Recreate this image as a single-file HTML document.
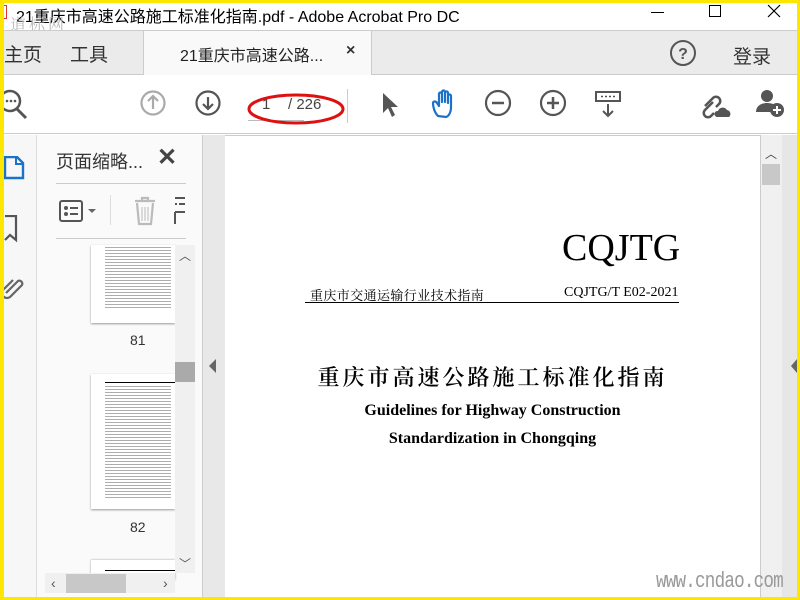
<!DOCTYPE html>
<html><head><meta charset="utf-8"><style>
*{margin:0;padding:0;box-sizing:border-box}
body{width:800px;height:600px;overflow:hidden;background:#ffe600;font-family:"Liberation Sans","Noto Sans CJK SC",sans-serif;position:relative}
.a{position:absolute}
.ic{position:absolute}
</style></head><body>
<div class="a" style="left:4px;top:3px;width:793px;height:594px;background:#fff;overflow:hidden">
 <div class="a" style="left:0;top:0px;font-size:16px;color:#000;white-space:nowrap;left:12px">21重庆市高速公路施工标准化指南.pdf - Adobe Acrobat Pro DC</div>
 <div class="a" style="left:0;top:2px;width:3px;height:14px;border:1px solid #d33;border-left:none"></div>
 <div class="a" style="left:6px;top:9px;font-size:16px;color:#bbb;font-family:'Noto Serif CJK SC',serif;letter-spacing:3px">道标网</div>
 <div class="a" style="left:647px;top:9px;width:13px;height:1px;background:#000"></div>
 <div class="a" style="left:705px;top:2px;width:12px;height:12px;border:1px solid #000"></div>
 <svg class="ic" style="left:763px;top:1px" width="14" height="14"><path d="M1 1L13 13M13 1L1 13" stroke="#000" stroke-width="1.2"/></svg>
 <!-- tab bar -->
 <div class="a" style="left:0;top:27px;width:793px;height:45px;background:#ebebeb;border-top:1px solid #ccc;border-bottom:1px solid #ccc"></div>
 <div class="a" style="left:139px;top:28px;width:229px;height:44px;background:#f9f9f9;border-left:1px solid #ccc;border-right:1px solid #ccc"></div>
 <div class="a" style="left:0;top:37px;font-size:19px;color:#333">主页</div>
 <div class="a" style="left:66px;top:37px;font-size:19px;color:#333">工具</div>
 <div class="a" style="left:176px;top:39px;font-size:16px;color:#222">21重庆市高速公路...</div>
 <div class="a" style="left:342px;top:39px;font-size:16px;color:#333;font-weight:bold">×</div>
 <svg class="ic" style="left:666px;top:37px" width="28" height="28"><circle cx="13" cy="13" r="12" fill="none" stroke="#555" stroke-width="2"/><text x="13" y="19" text-anchor="middle" font-size="16" font-weight="bold" fill="#555" font-family="Liberation Sans">?</text></svg>
 <div class="a" style="left:729px;top:39px;font-size:19px;color:#333">登录</div>
 <!-- toolbar -->
 <div class="a" style="left:0;top:72px;width:793px;height:59px;background:#fff;border-bottom:1px solid #ccc"></div>
 <svg class="ic" style="left:0;top:85px" width="30" height="34"><circle cx="6" cy="13" r="10" fill="none" stroke="#555" stroke-width="2.5"/><circle cx="3" cy="13" r="1.3" fill="#555"/><circle cx="7" cy="13" r="1.3" fill="#555"/><circle cx="11" cy="13" r="1.3" fill="#555"/><path d="M13 21 L22 30" stroke="#555" stroke-width="3"/></svg>
 <svg class="ic" style="left:136px;top:86px" width="28" height="28"><circle cx="13" cy="14" r="11.5" fill="none" stroke="#aaa" stroke-width="2.2"/><path d="M13 20V8M8 12l5-5 5 5" fill="none" stroke="#aaa" stroke-width="2.2"/></svg>
 <svg class="ic" style="left:191px;top:86px" width="28" height="28"><circle cx="13" cy="14" r="11.5" fill="none" stroke="#555" stroke-width="2.2"/><path d="M13 8v12M8 15l5 5 5-5" fill="none" stroke="#555" stroke-width="2.2"/></svg>
 <div class="a" style="left:244px;top:117px;width:56px;height:1px;background:#bbb"></div>
 <div class="a" style="left:258px;top:93px;font-size:15px;color:#444">1</div>
 <div class="a" style="left:284px;top:93px;font-size:15px;color:#444">/ 226</div>
 <svg class="ic" style="left:240px;top:84px" width="105" height="42"><ellipse cx="52" cy="22" rx="47" ry="14" fill="none" stroke="#d11" stroke-width="3"/></svg>
 <div class="a" style="left:343px;top:86px;width:1px;height:34px;background:#ccc"></div>
 <svg class="ic" style="left:375px;top:88px" width="22" height="28"><path d="M4 2L4 22L9 17L13 26L16 24L12 16L19 16Z" fill="#555"/></svg>
 <svg class="ic" style="left:426px;top:85px" width="32" height="34"><path d="M8 28C4 24 3 18 3 15c0-2 3-2 4 0l2 3V6c0-2 3-2 3 0v8V4c0-2 3-2 3 0v10V5c0-2 3-2 3 0v10V8c0-2 3-2 3 0v12c0 4-2 8-5 9z" fill="none" stroke="#1a73c9" stroke-width="2.2" stroke-linejoin="round"/></svg>
 <svg class="ic" style="left:480px;top:86px" width="28" height="28"><circle cx="14" cy="14" r="12" fill="none" stroke="#555" stroke-width="2.2"/><path d="M8 14h12" stroke="#555" stroke-width="2.5"/></svg>
 <svg class="ic" style="left:535px;top:86px" width="28" height="28"><circle cx="14" cy="14" r="12" fill="none" stroke="#555" stroke-width="2.2"/><path d="M8 14h12M14 8v12" stroke="#555" stroke-width="2.5"/></svg>
 <svg class="ic" style="left:590px;top:87px" width="30" height="30"><rect x="2" y="2" width="24" height="9" fill="none" stroke="#555" stroke-width="2"/><path d="M7 6.5h2M11 6.5h2M15 6.5h2M19 6.5h2" stroke="#555" stroke-width="1.5"/><path d="M14 14v12M9 21l5 5 5-5" fill="none" stroke="#555" stroke-width="2"/></svg>
 <svg class="ic" style="left:695px;top:85px" width="34" height="32"><path d="M6 18l8-8a4 4 0 016 6l-3 3M14 14l-8 8a4 4 0 006 6l3-3" fill="none" stroke="#555" stroke-width="2.5"/><path d="M18 29h12a4 4 0 00-2-7a5 5 0 00-9 1a3 3 0 00-1 6z" fill="#555"/></svg>
 <svg class="ic" style="left:751px;top:85px" width="34" height="34"><circle cx="12" cy="8" r="6" fill="#555"/><path d="M1 24c0-6 5-9 11-9s8 2 9 4v5z" fill="#555"/><circle cx="22" cy="22" r="7" fill="#555"/><path d="M18 22h8M22 18v8" stroke="#fff" stroke-width="2"/></svg>
 <!-- left icon column -->
 <div class="a" style="left:0;top:132px;width:33px;height:462px;background:#f7f7f7;border-right:1px solid #ddd"></div>
 <svg class="ic" style="left:0;top:153px" width="22" height="30"><path d="M1 1h12l6 6v15H1z" fill="none" stroke="#1a73c9" stroke-width="2.4"/><path d="M12 1v7h7" fill="none" stroke="#1a73c9" stroke-width="2"/></svg>
 <svg class="ic" style="left:0;top:212px" width="16" height="30"><path d="M1 1h11v24l-6-5-5 5" fill="none" stroke="#555" stroke-width="2.2"/></svg>
 <svg class="ic" style="left:0;top:268px" width="22" height="30"><path d="M2 22l12-12a3 3 0 014 4L6 26a5 5 0 01-7-7l10-10" fill="none" stroke="#666" stroke-width="2.2"/></svg>
 <!-- thumbnail panel -->
 <div class="a" style="left:33px;top:132px;width:166px;height:462px;background:#fafafa;border-right:1px solid #ccc"></div>
 <div class="a" style="left:52px;top:145px;font-size:18px;color:#333">页面缩略...</div>
 <div class="a" style="left:153px;top:140px;font-size:24px;color:#444;font-weight:bold">✕</div>
 <div class="a" style="left:52px;top:180px;width:130px;height:1px;background:#ccc"></div>
 <svg class="ic" style="left:54px;top:196px" width="46" height="26"><rect x="2" y="2" width="22" height="20" rx="2" fill="none" stroke="#555" stroke-width="2"/><circle cx="8" cy="9" r="2" fill="#555"/><circle cx="8" cy="15" r="2" fill="#555"/><path d="M12 9h8M12 15h8" stroke="#555" stroke-width="2"/><path d="M30 10l4 4 4-4z" fill="#666"/></svg>
 <div class="a" style="left:106px;top:192px;width:1px;height:30px;background:#ddd"></div>
 <svg class="ic" style="left:128px;top:192px" width="28" height="32"><path d="M3 6h20M10 6V3h6v3M5 8l2 21h12l2-21" fill="none" stroke="#bbb" stroke-width="2.2"/><path d="M10 12v14M13 12v14M16 12v14" stroke="#bbb"/></svg>
 <svg class="ic" style="left:170px;top:193px" width="14" height="30"><path d="M1 2h10M1 8h2M5 8h6M1 16h10M1 16v12" fill="none" stroke="#555" stroke-width="2"/></svg>
 <div class="a" style="left:52px;top:235px;width:130px;height:1px;background:#ccc"></div>
 <div class="a" style="left:87px;top:242px;width:84px;height:78px;background:#fff;box-shadow:0 1px 2px #999;overflow:hidden">
  <div style="margin:2px 4px 0 14px;height:62px;background:repeating-linear-gradient(#777 0 1px,#fff 1px 3px);opacity:.6"></div>
 </div>
 <div class="a" style="left:126px;top:329px;font-size:14px;color:#333">81</div>
 <div class="a" style="left:87px;top:371px;width:84px;height:135px;background:#fff;box-shadow:0 1px 2px #999;overflow:hidden">
  <div style="margin:8px 0 0 14px;height:1px;background:#000"></div>
  <div style="margin:3px 4px 0 14px;height:112px;background:repeating-linear-gradient(#777 0 1px,#fff 1px 3px);opacity:.6"></div>
 </div>
 <div class="a" style="left:126px;top:516px;font-size:14px;color:#333">82</div>
 <div class="a" style="left:87px;top:557px;width:84px;height:20px;background:#fff;box-shadow:0 0 2px #999"><div style="margin:10px 0 0 14px;height:1px;background:#000"></div></div>
 <div class="a" style="left:171px;top:242px;width:20px;height:328px;background:#f0f0f0"></div>
 <div class="a" style="left:175px;top:244px;font-size:12px;color:#555">︿</div>
 <div class="a" style="left:171px;top:359px;width:20px;height:20px;background:#aaa"></div>
 <div class="a" style="left:175px;top:552px;font-size:12px;color:#555">﹀</div>
 <div class="a" style="left:41px;top:570px;width:130px;height:20px;background:#f0f0f0"></div>
 <div class="a" style="left:62px;top:571px;width:60px;height:19px;background:#c8c8c8"></div>
 <div class="a" style="left:47px;top:572px;font-size:14px;color:#555">‹</div>
 <div class="a" style="left:159px;top:572px;font-size:14px;color:#555">›</div>
 <div class="a" style="left:199px;top:132px;width:22px;height:462px;background:#e8e8e8"></div>
 <svg class="ic" style="left:204px;top:355px" width="10" height="16"><path d="M8 1L1 8l7 7z" fill="#666"/></svg>
 <!-- doc -->
 <div class="a" style="left:221px;top:132px;width:535px;height:462px;background:#fff;border-top:1px solid #ccc"></div>
 <div class="a" style="left:558px;top:223px;font-size:38px;color:#000;font-family:'Liberation Serif',serif">CQJTG</div>
 <div class="a" style="left:306px;top:282px;font-size:13px;color:#000;font-family:'Noto Serif CJK SC',serif;letter-spacing:0.4px">重庆市交通运输行业技术指南</div>
 <div class="a" style="left:560px;top:282px;font-size:14px;color:#000;font-family:'Liberation Serif',serif">CQJTG/T E02-2021</div>
 <div class="a" style="left:301px;top:299px;width:374px;height:1px;background:#000"></div>
 <div class="a" style="left:221px;top:358px;width:535px;text-align:center;font-size:22px;color:#000;letter-spacing:3px;font-family:'Noto Serif CJK SC',serif;font-weight:600">重庆市高速公路施工标准化指南</div>
 <div class="a" style="left:221px;top:399px;width:535px;text-align:center;font-size:16px;font-weight:bold;color:#000;font-family:'Liberation Serif',serif">Guidelines for Highway Construction</div>
 <div class="a" style="left:221px;top:427px;width:535px;text-align:center;font-size:16px;font-weight:bold;color:#000;font-family:'Liberation Serif',serif">Standardization in Chongqing</div>
 <div class="a" style="left:756px;top:132px;width:22px;height:462px;background:#f0f0f0;border-left:1px solid #ccc"></div>
 <div class="a" style="left:761px;top:142px;font-size:12px;color:#444">︿</div>
 <div class="a" style="left:758px;top:161px;width:18px;height:21px;background:#c8c8c8"></div>
 <div class="a" style="left:778px;top:132px;width:15px;height:462px;background:#e6e6e6"></div>
 <svg class="ic" style="left:786px;top:355px" width="8" height="16"><path d="M7 1L1 8l6 7z" fill="#666"/></svg>
 <div class="a" style="left:652px;top:566px;font-size:22px;color:#999;font-family:'Liberation Mono',monospace;letter-spacing:-1px;transform:scaleX(.8);transform-origin:left">www.cndao.com</div>
</div>
</body></html>
